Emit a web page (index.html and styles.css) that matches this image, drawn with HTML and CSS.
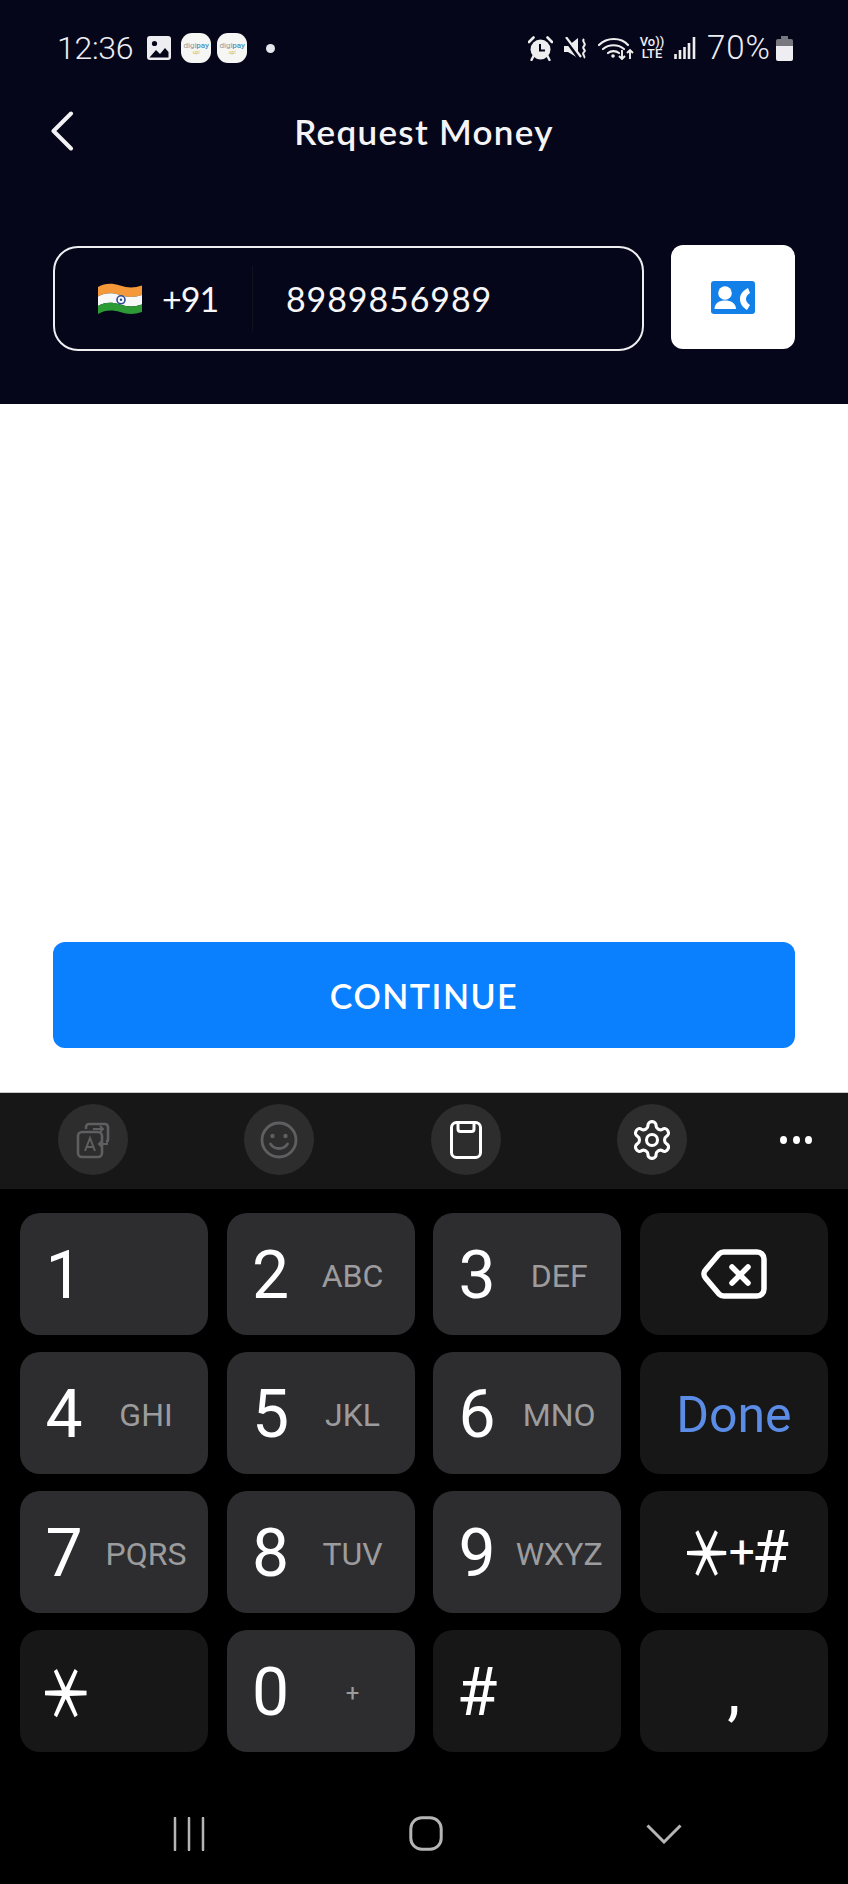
FILE: index.html
```html
<!DOCTYPE html>
<html lang="en">
<head>
<meta charset="utf-8">
<title>Request Money</title>
<link rel="stylesheet" href="styles.css">
</head>
<body>
<div class="screen">
  <header class="top">
    <div class="status">
      <div class="status-left">
        <span class="time">12:36</span>
        <svg class="ic-image" viewBox="0 0 24 24"><rect x="0" y="0" width="24" height="24" rx="3" fill="#eeeef2"/><path d="M2.500 21.500 9 14l4 4 5-6 3.500 4v5.500z" fill="#06061a"/><circle cx="7.500" cy="7.500" r="2.600" fill="#06061a"/></svg>
        <span class="digi"><span class="digi-name">digi<b>pay</b></span><span class="digi-sub">upi</span></span>
        <span class="digi digi-second"><span class="digi-name">digi<b>pay</b></span><span class="digi-sub">upi</span></span>
        <span class="dot"></span>
      </div>
      <div class="status-right">
        <svg class="ic-alarm" viewBox="0 0 25 25"><path d="M1 6 5.500 1.500M24 6 19.500 1.500" stroke="#eee" stroke-width="2.600" stroke-linecap="round" fill="none"/><path d="M5.500 20 3.500 24M19.500 20l2 4" stroke="#eee" stroke-width="2.400" stroke-linecap="round"/><circle cx="12.500" cy="13.500" r="10" fill="#eee"/><path d="M12 8v6.500h5" stroke="#06061a" stroke-width="2" fill="none"/></svg>
        <svg class="ic-mute" viewBox="0 0 24 23"><path d="M0 9h4L14 1v20L4 15H0z" fill="#eee"/><path d="M1 1 16 22" stroke="#06061a" stroke-width="4"/><path d="M2 0 17 20" stroke="#eee" stroke-width="2.200"/><path d="M20 2c-3 3 3 4 0 7s3 4 0 6 2 4 0 6" stroke="#eee" stroke-width="2" fill="none"/></svg>
        <svg class="ic-wifi" viewBox="0 0 36 24"><path d="M1 9c8-8 22-8 29 0M5 13c6-5 15-5 21 0M10 17c3-2.500 8-2.500 11 0" stroke="#eee" stroke-width="2.200" fill="none" stroke-linecap="round"/><circle cx="15" cy="20" r="1.800" fill="#eee"/><path d="M24 14v9m-3-3 3 3 3-3M32 23v-9m-3 3 3-3 3 3" stroke="#eee" stroke-width="1.900" fill="none"/></svg>
        <span class="volte"><span>Vo))</span><span>LTE</span></span>
        <svg class="ic-signal" viewBox="0 0 22 22"><path d="M1.500 17v5M6 13v9M10.500 10v12M15 6v16M20 0v22" stroke="#eee" stroke-width="2.600"/></svg>
        <span class="pct">70%</span>
        <svg class="ic-batt" viewBox="0 0 17 25"><path d="M5 0h7v3h3a2 2 0 0 1 2 2v5H0V5a2 2 0 0 1 2-2h3z" fill="#77777f"/><path d="M0 10h17v13a2 2 0 0 1-2 2H2a2 2 0 0 1-2-2z" fill="#eeeef2"/></svg>
      </div>
    </div>
    <div class="titlebar">
      <svg class="ic-back" viewBox="0 0 24 40"><path d="M21 2.500 3.500 20 21 37.500" stroke="#f2f2f4" stroke-width="4" fill="none" stroke-linecap="round" stroke-linejoin="round"/></svg>
      <h1 class="title">Request Money</h1>
    </div>
    <div class="phone-row">
      <div class="phone-input">
        <svg class="flag" viewBox="0 0 44 32"><path d="M0 4C7 0 14 0 22 2.500S36 5 44 2.500V12C36 14.500 30 14.500 22 12S7 9.500 0 13.500z" fill="#f5983a"/><path d="M0 13.500C7 9.500 14 9.500 22 12s14 2.500 22 0v9.500C36 24 30 24 22 21.500S7 19 0 23z" fill="#f8f8f8"/><path d="M0 23c7-4 14-4 22-1.500s14 2.500 22 0v7.500C36 31.500 30 31.500 22 29S7 27 0 31z" fill="#2c9a35"/><circle cx="23" cy="16.800" r="4" fill="none" stroke="#2a4a93" stroke-width="1.600"/><circle cx="23" cy="16.800" r="1.200" fill="#2a4a93"/></svg>
        <span class="code">+91</span>
        <span class="divider"></span>
        <span class="number">8989856989</span>
      </div>
      <div class="contact">
        <svg class="ic-contact" viewBox="0 0 44 33"><rect width="44" height="33" rx="3" fill="#1380ea"/><circle cx="14" cy="12" r="6.800" fill="#fff"/><path d="M3.500 28c0-6 5-8.500 10.500-8.500S25 22 25 28z" fill="#fff"/><path d="M37 7C31 10 29 14 29 18c0 4 2 8 7 11l3-5c-3-2-4-4-4-6s1-4 4-6z" fill="#fff"/></svg>
      </div>
    </div>
  </header>

  <main class="content">
    <button class="continue" type="button">CONTINUE</button>
  </main>

  <section class="keyboard">
    <div class="toolbar">
      <div class="tools">
        <span class="tool">
          <svg class="ic-tool" viewBox="0 0 40 40"><path d="M13 9V7a3 3 0 0 1 3-3h16a3 3 0 0 1 3 3v12a3 3 0 0 1-2 3" fill="none" stroke="#5f5f61" stroke-width="2.600"/><rect x="5" y="12" width="24" height="25" rx="4" fill="none" stroke="#5f5f61" stroke-width="2.600"/><path d="M20 9h10m-3-3 3 3-3 3M35 24H26m3-3-3 3 3 3" fill="none" stroke="#5f5f61" stroke-width="2"/><path d="M12 31l5-13 5 13m-8-4h6" fill="none" stroke="#5f5f61" stroke-width="2"/></svg>
        </span>
        <span class="tool">
          <svg class="ic-tool" viewBox="0 0 40 40"><circle cx="20" cy="20" r="17" fill="none" stroke="#5f5f61" stroke-width="2.800"/><circle cx="13.500" cy="16" r="2.200" fill="#5f5f61"/><circle cx="26.500" cy="16" r="2.200" fill="#5f5f61"/><path d="M11.500 24c4 6 13 6 17 0" fill="none" stroke="#5f5f61" stroke-width="2.800" stroke-linecap="round"/></svg>
        </span>
        <span class="tool">
          <svg class="ic-tool" viewBox="0 0 40 40"><rect x="5.500" y="2.500" width="29" height="35" rx="5" fill="none" stroke="#fff" stroke-width="3"/><path d="M12 3v6a2.500 2.500 0 0 0 2.500 2.500h11A2.500 2.500 0 0 0 28 9V3" fill="none" stroke="#fff" stroke-width="3"/></svg>
        </span>
        <span class="tool">
          <svg class="ic-gear" viewBox="0 0 24 24"><path d="M12.220 2h-.44a2 2 0 0 0-2 2v.18a2 2 0 0 1-1 1.730l-.43.250a2 2 0 0 1-2 0l-.15-.08a2 2 0 0 0-2.730.730l-.22.380a2 2 0 0 0 .730 2.730l.15.100a2 2 0 0 1 1 1.720v.510a2 2 0 0 1-1 1.740l-.15.090a2 2 0 0 0-.730 2.730l.22.380a2 2 0 0 0 2.730.730l.15-.08a2 2 0 0 1 2 0l.43.250a2 2 0 0 1 1 1.730V20a2 2 0 0 0 2 2h.44a2 2 0 0 0 2-2v-.18a2 2 0 0 1 1-1.730l.43-.25a2 2 0 0 1 2 0l.15.08a2 2 0 0 0 2.730-.73l.22-.39a2 2 0 0 0-.73-2.730l-.15-.08a2 2 0 0 1-1-1.740v-.5a2 2 0 0 1 1-1.740l.15-.09a2 2 0 0 0 .73-2.730l-.22-.38a2 2 0 0 0-2.730-.73l-.15.08a2 2 0 0 1-2 0l-.43-.25a2 2 0 0 1-1-1.730V4a2 2 0 0 0-2-2z" fill="none" stroke="#fff" stroke-width="1.700"/><circle cx="12" cy="12" r="3" fill="none" stroke="#fff" stroke-width="1.700"/></svg>
        </span>
      </div>
      <span class="more"><i></i><i></i><i></i></span>
    </div>

    <div class="keypad">
      <div class="key"><span class="digit">1</span></div>
      <div class="key"><span class="digit">2</span><span class="letters">ABC</span></div>
      <div class="key"><span class="digit">3</span><span class="letters">DEF</span></div>
      <div class="key key-dark key-center">
        <svg class="ic-backspace" viewBox="0 0 66 50"><path d="M23 3h33a7 7 0 0 1 7 7v30a7 7 0 0 1-7 7H23a7 7 0 0 1-5-2L4.500 29a6 6 0 0 1 0-8L18 5a7 7 0 0 1 5-2z" fill="none" stroke="#fff" stroke-width="5.500" stroke-linejoin="round"/><path d="M31 18l16 16M47 18 31 34" stroke="#fff" stroke-width="5.500" stroke-linecap="round"/></svg>
      </div>

      <div class="key"><span class="digit">4</span><span class="letters">GHI</span></div>
      <div class="key"><span class="digit">5</span><span class="letters">JKL</span></div>
      <div class="key"><span class="digit">6</span><span class="letters">MNO</span></div>
      <div class="key key-dark key-center"><span class="done">Done</span></div>

      <div class="key"><span class="digit">7</span><span class="letters">PQRS</span></div>
      <div class="key"><span class="digit">8</span><span class="letters">TUV</span></div>
      <div class="key"><span class="digit">9</span><span class="letters">WXYZ</span></div>
      <div class="key key-dark key-center"><span class="symbols"><span class="star star-small">＊</span><span class="plus">+</span><span class="hash-small">#</span></span></div>

      <div class="key key-dark"><span class="digit digit-star"><span class="star star-large">＊</span></span></div>
      <div class="key"><span class="digit">0</span><span class="letters letters-plus">+</span></div>
      <div class="key key-dark"><span class="digit">#</span></div>
      <div class="key key-dark key-center"><span class="comma">,</span></div>
    </div>

    <nav class="navbar">
      <svg class="ic-recents" viewBox="0 0 32 34"><path d="M2 1v32M16 1v32M30 1v32" stroke="#b5b5b5" stroke-width="2.500" stroke-linecap="round"/></svg>
      <svg class="ic-home" viewBox="0 0 34 35"><rect x="1.800" y="1.800" width="30.400" height="31.400" rx="11" fill="none" stroke="#b5b5b5" stroke-width="3"/></svg>
      <svg class="ic-hide" viewBox="0 0 36 20"><path d="M1.500 1.500 18 18 34.500 1.500" fill="none" stroke="#b5b5b5" stroke-width="3"/></svg>
    </nav>
  </section>
</div>
</body>
</html>
```

FILE: styles.css
```css
* { box-sizing: border-box; }
html, body { margin: 0; padding: 0; }
body { width: 848px; height: 1884px; overflow: hidden; font-family: "Roboto", "Liberation Sans", sans-serif; }
svg { display: block; flex: none; }

.screen { width: 848px; height: 1884px; display: flex; flex-direction: column; background: #fff; }

/* Header */
.top { height: 404px; padding-top: 33px; background: #06061a; color: #f2f2f5; flex: none; }
.status { height: 30px; display: flex; justify-content: space-between; align-items: center; padding: 0 55px 0 57px; color: #eeeef2; }
.status-left, .status-right { display: flex; align-items: center; }
.time { font-size: 32px; font-weight: 300; letter-spacing: -0.300px; line-height: 30px; }
.ic-image { width: 24px; height: 24px; margin-left: 14px; }
.digi { width: 30px; height: 30px; margin-left: 10px; border-radius: 11px; background: #f6f6f4; display: flex; flex-direction: column; align-items: center; justify-content: center; color: #8a9aa0; }
.digi-second { margin-left: 6px; }
.digi-name { font-size: 8px; line-height: 8px; white-space: nowrap; }
.digi-name b { font-weight: 500; color: #4a93c0; }
.digi-sub { font-size: 5px; line-height: 5px; color: #cdb860; }
.dot { width: 9px; height: 9px; border-radius: 50%; background: #e6e6ee; margin-left: 19px; }

.ic-alarm { width: 25px; height: 25px; }
.ic-mute { width: 24px; height: 23px; margin-left: 11px; }
.ic-wifi { width: 36px; height: 24px; margin-left: 10px; }
.volte { width: 24px; margin-left: 6px; display: flex; flex-direction: column; align-items: center; font-size: 13px; font-weight: 500; line-height: 12.500px; white-space: nowrap; }
.ic-signal { width: 22px; height: 22px; margin-left: 10px; }
.pct { font-size: 33px; font-weight: 300; line-height: 30px; letter-spacing: 1px; margin-left: 11px; }
.ic-batt { width: 17px; height: 25px; margin-left: 5px; }

.titlebar { margin-top: 42px; height: 52px; position: relative; display: flex; align-items: center; justify-content: center; }
.ic-back { width: 24px; height: 40px; position: absolute; left: 50px; top: 6px; }
.title { margin: 0; font-family: "Lato", sans-serif; font-size: 35px; font-weight: 600; letter-spacing: 1.300px; line-height: 52px; color: #f4f4f6; }

.phone-row { margin-top: 88px; padding: 0 53px; display: flex; align-items: flex-start; gap: 27px; }
.phone-input { width: 591px; height: 105px; margin-top: 1px; border: 2px solid #efeff2; border-radius: 25px; display: flex; align-items: center; padding-left: 43px; font-family: "Lato", sans-serif; font-size: 34px; color: #f7f7f9; }
.flag { width: 44px; height: 32px; }
.code { margin-left: 20px; width: 55px; letter-spacing: -1px; }
.divider { width: 1px; height: 66px; margin-left: 35px; background: #10101f; }
.number { margin-left: 33px; letter-spacing: 0.900px; }
.contact { width: 124px; height: 104px; background: #fff; border-radius: 12px; display: flex; align-items: center; justify-content: center; }
.ic-contact { width: 44px; height: 33px; }

/* Content */
.content { flex: 1; display: flex; flex-direction: column; justify-content: flex-end; padding: 0 53px 44px; border-bottom: 1px solid #c8c8c8; }
.continue { height: 106px; border: 0; border-radius: 12px; background: #0a80ff; color: #fff; font-family: "Lato", sans-serif; font-size: 34px; font-weight: 600; letter-spacing: 1.500px; }

/* Keyboard */
.keyboard { flex: none; height: 791px; background: #000; }
.toolbar { height: 96px; background: #171718; display: flex; justify-content: space-between; align-items: flex-start; padding: 11px 36px 0 58px; }
.tools { display: flex; gap: 116.300px; }
.tool { width: 70px; height: 71px; flex: none; border-radius: 50%; background: #2d2d2e; display: flex; align-items: center; justify-content: center; }
.ic-tool { width: 40px; height: 40px; }
.ic-gear { width: 44px; height: 44px; }
.more { margin-top: 32px; width: 32px; height: 8px; display: flex; justify-content: space-between; }
.more i { width: 7px; height: 8px; border-radius: 50%; background: #fff; }

.keypad { padding: 24px 20px 0 20px; display: grid; grid-template-columns: repeat(4, 1fr); grid-auto-rows: 122px; column-gap: 18.300px; row-gap: 17px; }
.key { border-radius: 20px; background: #2d2d2f; display: grid; grid-template-columns: 88px 76px; align-items: center; justify-items: center; padding-top: 3px; color: #fff; }
.key-dark { background: #171718; }
.key-center { display: flex; justify-content: center; padding-top: 0; }
.digit { font-size: 66px; line-height: 70px; }
.digit-star { font-size: 60px; }
.letters { font-size: 32px; line-height: 34px; color: #9c9c9e; white-space: nowrap; }
.letters-plus { font-size: 24px; }
.star { display: inline-block; font-family: "Noto Sans CJK JP", sans-serif; font-weight: 500; }
.star-large { transform: translate(4px, 3px) scale(0.9, 1.15) rotate(90deg); }
.done { font-size: 50px; color: #5b8ce6; line-height: 60px; margin-top: 3px; }
.symbols { display: flex; align-items: center; font-size: 62px; line-height: 60px; }
.star-small { font-size: 58px; transform: translateY(1px) scale(0.88, 1.12) rotate(90deg); }
.plus { font-size: 46px; margin-left: -9px; }
.hash-small { font-size: 60px; letter-spacing: -1px; margin-left: -3px; }
.comma { font-size: 66px; line-height: 70px; }
.ic-backspace { width: 66px; height: 50px; }

.navbar { padding: 64px 0 0 173px; display: flex; align-items: center; gap: 203.500px; }
.ic-recents { width: 32px; height: 34px; }
.ic-home { width: 34px; height: 35px; }
.ic-hide { width: 36px; height: 20px; }
```
